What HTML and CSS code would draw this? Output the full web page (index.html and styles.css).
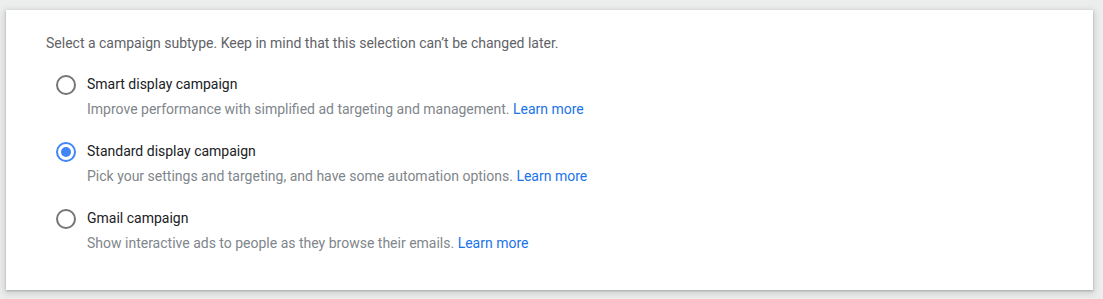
FILE: index.html
```html
<!DOCTYPE html>
<html>
<head>
<meta charset="utf-8">
<link rel="stylesheet" href="styles.css">
</head>
<body>
<div class="card">
  <p class="intro">Select a campaign subtype. Keep in mind that this selection can’t be changed later.</p>
  <div class="options">
    <div class="option">
      <span class="radio"></span>
      <div class="text">
        <div class="label">Smart display campaign</div>
        <div class="desc">Improve performance with simplified ad targeting and management. <a href="#">Learn more</a></div>
      </div>
    </div>
    <div class="option">
      <span class="radio checked"></span>
      <div class="text">
        <div class="label">Standard display campaign</div>
        <div class="desc">Pick your settings and targeting, and have some automation options. <a href="#">Learn more</a></div>
      </div>
    </div>
    <div class="option">
      <span class="radio"></span>
      <div class="text">
        <div class="label">Gmail campaign</div>
        <div class="desc">Show interactive ads to people as they browse their emails. <a href="#">Learn more</a></div>
      </div>
    </div>
  </div>
</div>
</body>
</html>
```
FILE: styles.css
```css
html, body {
  margin: 0;
  padding: 0;
  background: #eceded;
  font-family: Roboto, "Liberation Sans", sans-serif;
  font-size: 14px;
}
body {
  padding: 10px 10px 9px 6px;
  box-sizing: border-box;
  height: 299px;
}
.card {
  background: #fff;
  height: 280px;
  box-sizing: border-box;
  padding: 23px 40px 0 40px;
  box-shadow: 0 1px 2px rgba(60,64,67,0.3), 0 2px 6px 2px rgba(60,64,67,0.15);
}
.intro {
  margin: 0;
  line-height: 20px;
  color: #5f6368;
}
.options {
  display: flex;
  flex-direction: column;
  gap: 22px;
  margin-top: 21px;
  padding-left: 10px;
}
.option {
  display: flex;
  gap: 11px;
  align-items: flex-start;
}
.radio {
  width: 20px;
  height: 20px;
  box-sizing: border-box;
  border: 2px solid #757575;
  border-radius: 50%;
  flex: none;
  margin-top: 1px;
  display: flex;
  align-items: center;
  justify-content: center;
}
.radio.checked {
  border-color: #4285f4;
}
.radio.checked::after {
  content: "";
  width: 10px;
  height: 10px;
  border-radius: 50%;
  background: #4285f4;
}
.label {
  color: #202124;
  line-height: 20px;
}
.desc {
  color: #80868b;
  line-height: 20px;
  margin-top: 5px;
}
.desc a {
  color: #1a73e8;
  text-decoration: none;
}
```
